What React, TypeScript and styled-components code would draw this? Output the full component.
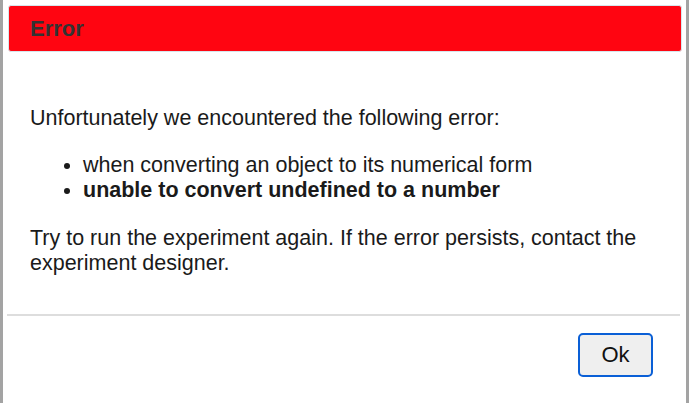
import React from 'react'
import styled, { createGlobalStyle } from 'styled-components'

const GlobalStyle = createGlobalStyle`
  html, body {
    margin: 0;
    padding: 0;
    background: #ffffff;
  }
  body {
    font-family: "Liberation Sans", Arial, sans-serif;
  }
`

const Dialog = styled.div`
  box-sizing: border-box;
  width: 689px;
  height: 403px;
  border-left: 3px solid #a3a3a3;
  border-right: 3px solid #a3a3a3;
  background: #ffffff;
  display: flex;
  flex-direction: column;
  padding: 5px 4px 0 4px;
`

const TitleBar = styled.div`
  height: 47px;
  margin-left: 1px;
  background: #ff0511;
  border: 1px solid #d6e6ec;
  border-radius: 3px;
  display: flex;
  align-items: center;
  padding-left: 21px;
  box-sizing: border-box;
`

const Title = styled.span`
  color: #333333;
  font-size: 22px;
  font-weight: bold;
`

const Content = styled.div`
  flex: 1;
  padding: 54px 0 0 23px;
  color: #1a1a1a;
  font-size: 21.5px;
  line-height: 25px;
`

const Paragraph = styled.p`
  margin: 0 0 22px 0;
`

const List = styled.ul`
  margin: 0 0 23px 0;
  padding-left: 53px;
`

const Item = styled.li<{ $strong?: boolean }>`
  font-weight: ${({ $strong }) => ($strong ? 'bold' : 'normal')};
`

const Footer = styled.div`
  height: 89px;
  border-top: 2px solid #dddddd;
  margin: 0 2px 0 0;
  display: flex;
  justify-content: flex-end;
  align-items: flex-start;
  padding: 17px 27px 0 0;
  box-sizing: border-box;
`

const OkButton = styled.button`
  width: 75px;
  height: 44px;
  border: 2px solid #0a5fd6;
  border-radius: 5px;
  background: #efefef;
  color: #111111;
  font-family: "Liberation Sans", Arial, sans-serif;
  font-size: 22px;
  cursor: pointer;
`

const App = () => {
  return (
    <>
      <GlobalStyle />
      <Dialog>
        <TitleBar>
          <Title>Error</Title>
        </TitleBar>
        <Content>
          <Paragraph>Unfortunately we encountered the following error:</Paragraph>
          <List>
            <Item>when converting an object to its numerical form</Item>
            <Item $strong>unable to convert undefined to a number</Item>
          </List>
          <Paragraph>
            Try to run the experiment again. If the error persists, contact the experiment designer.
          </Paragraph>
        </Content>
        <Footer>
          <OkButton>Ok</OkButton>
        </Footer>
      </Dialog>
    </>
  )
}

export default App
